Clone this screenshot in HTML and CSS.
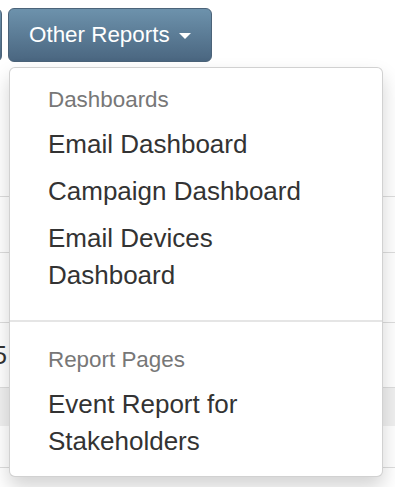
FILE: index.html
```html
<!DOCTYPE html>
<html lang="en">
<head>
    <meta charset="UTF-8">
    <meta name="viewport" content="width=device-width, initial-scale=1.0">
    <title>Reports</title>
    <link rel="stylesheet" href="styles.css">
</head>
<body>
    <div class="toolbar">
        <button class="btn btn-prev" aria-label="Previous"></button>
        <div class="dropdown">
            <button class="btn">Other Reports <span class="caret"></span></button>
            <ul class="menu">
                <li class="menu-header">Dashboards</li>
                <li><a href="#">Email Dashboard</a></li>
                <li><a href="#">Campaign Dashboard</a></li>
                <li><a href="#">Email Devices Dashboard</a></li>
                <li class="divider"></li>
                <li class="menu-header">Report Pages</li>
                <li><a href="#">Event Report for Stakeholders</a></li>
            </ul>
        </div>
    </div>

    <div class="report">
        <div class="row row-head"></div>
        <div class="row row-a"></div>
        <div class="row row-b"></div>
        <div class="row row-c"><div class="cell">25</div></div>
        <div class="row row-d"></div>
        <div class="row row-e"></div>
        <div class="row row-f"></div>
    </div>
</body>
</html>
```

FILE: styles.css
```css
body {
    font-family: 'Liberation Sans', Arial, sans-serif;
    background-color: #ffffff;
    color: #333333;
    margin: 0;
    padding: 0;
}

.toolbar {
    display: flex;
    gap: 6px;
    padding-top: 8px;
}

.btn {
    font-family: inherit;
    font-size: 22.4px;
    line-height: 32px;
    padding: 10px 20px;
    color: #ffffff;
    background: linear-gradient(#6d92ac, #4a6680);
    border: 1px solid #4b6379;
    border-radius: 6px;
    white-space: nowrap;
    cursor: pointer;
}

.btn-prev {
    width: 42px;
    height: 54px;
    margin-left: -40px;
}

.caret {
    display: inline-block;
    width: 0;
    height: 0;
    margin-left: 3px;
    vertical-align: middle;
    border-top: 6.4px solid #ffffff;
    border-left: 6.4px solid transparent;
    border-right: 6.4px solid transparent;
}

.dropdown {
    position: relative;
}

.menu {
    position: absolute;
    top: 100%;
    left: 1px;
    z-index: 10;
    box-sizing: border-box;
    width: 374px;
    margin: 5px 0 0;
    padding: 11px 0 11px;
    list-style: none;
    background-color: #ffffff;
    border: 1px solid rgba(0,0,0,0.18);
    border-radius: 6px;
    box-shadow: 0 10px 19px rgba(0,0,0,0.175);
}

.menu-header {
    padding: 5px 38px;
    font-size: 22.4px;
    line-height: 32px;
    color: #777777;
}

.menu a {
    display: block;
    padding: 5px 38px;
    font-size: 26px;
    line-height: 37px;
    color: #333333;
    text-decoration: none;
}

.divider {
    height: 2px;
    margin: 21px 0 17px;
    background-color: #e5e5e5;
}

.report {
    margin-top: 8px;
}

.row {
    border-bottom: 1px solid #dddddd;
    box-sizing: border-box;
}

.row-head { height: 127px; }
.row-a { height: 56px; }
.row-b { height: 70px; }
.row-c { height: 65px; display: flex; align-items: center; }
.row-d { height: 38px; background-color: #f0f0f0; border-bottom: none; }
.row-e { height: 42px; }
.row-f { height: 40px; border-bottom: none; }

.cell {
    display: flex;
    justify-content: flex-end;
    width: 7px;
    overflow: hidden;
    font-size: 25.6px;
    color: #333333;
}
```
